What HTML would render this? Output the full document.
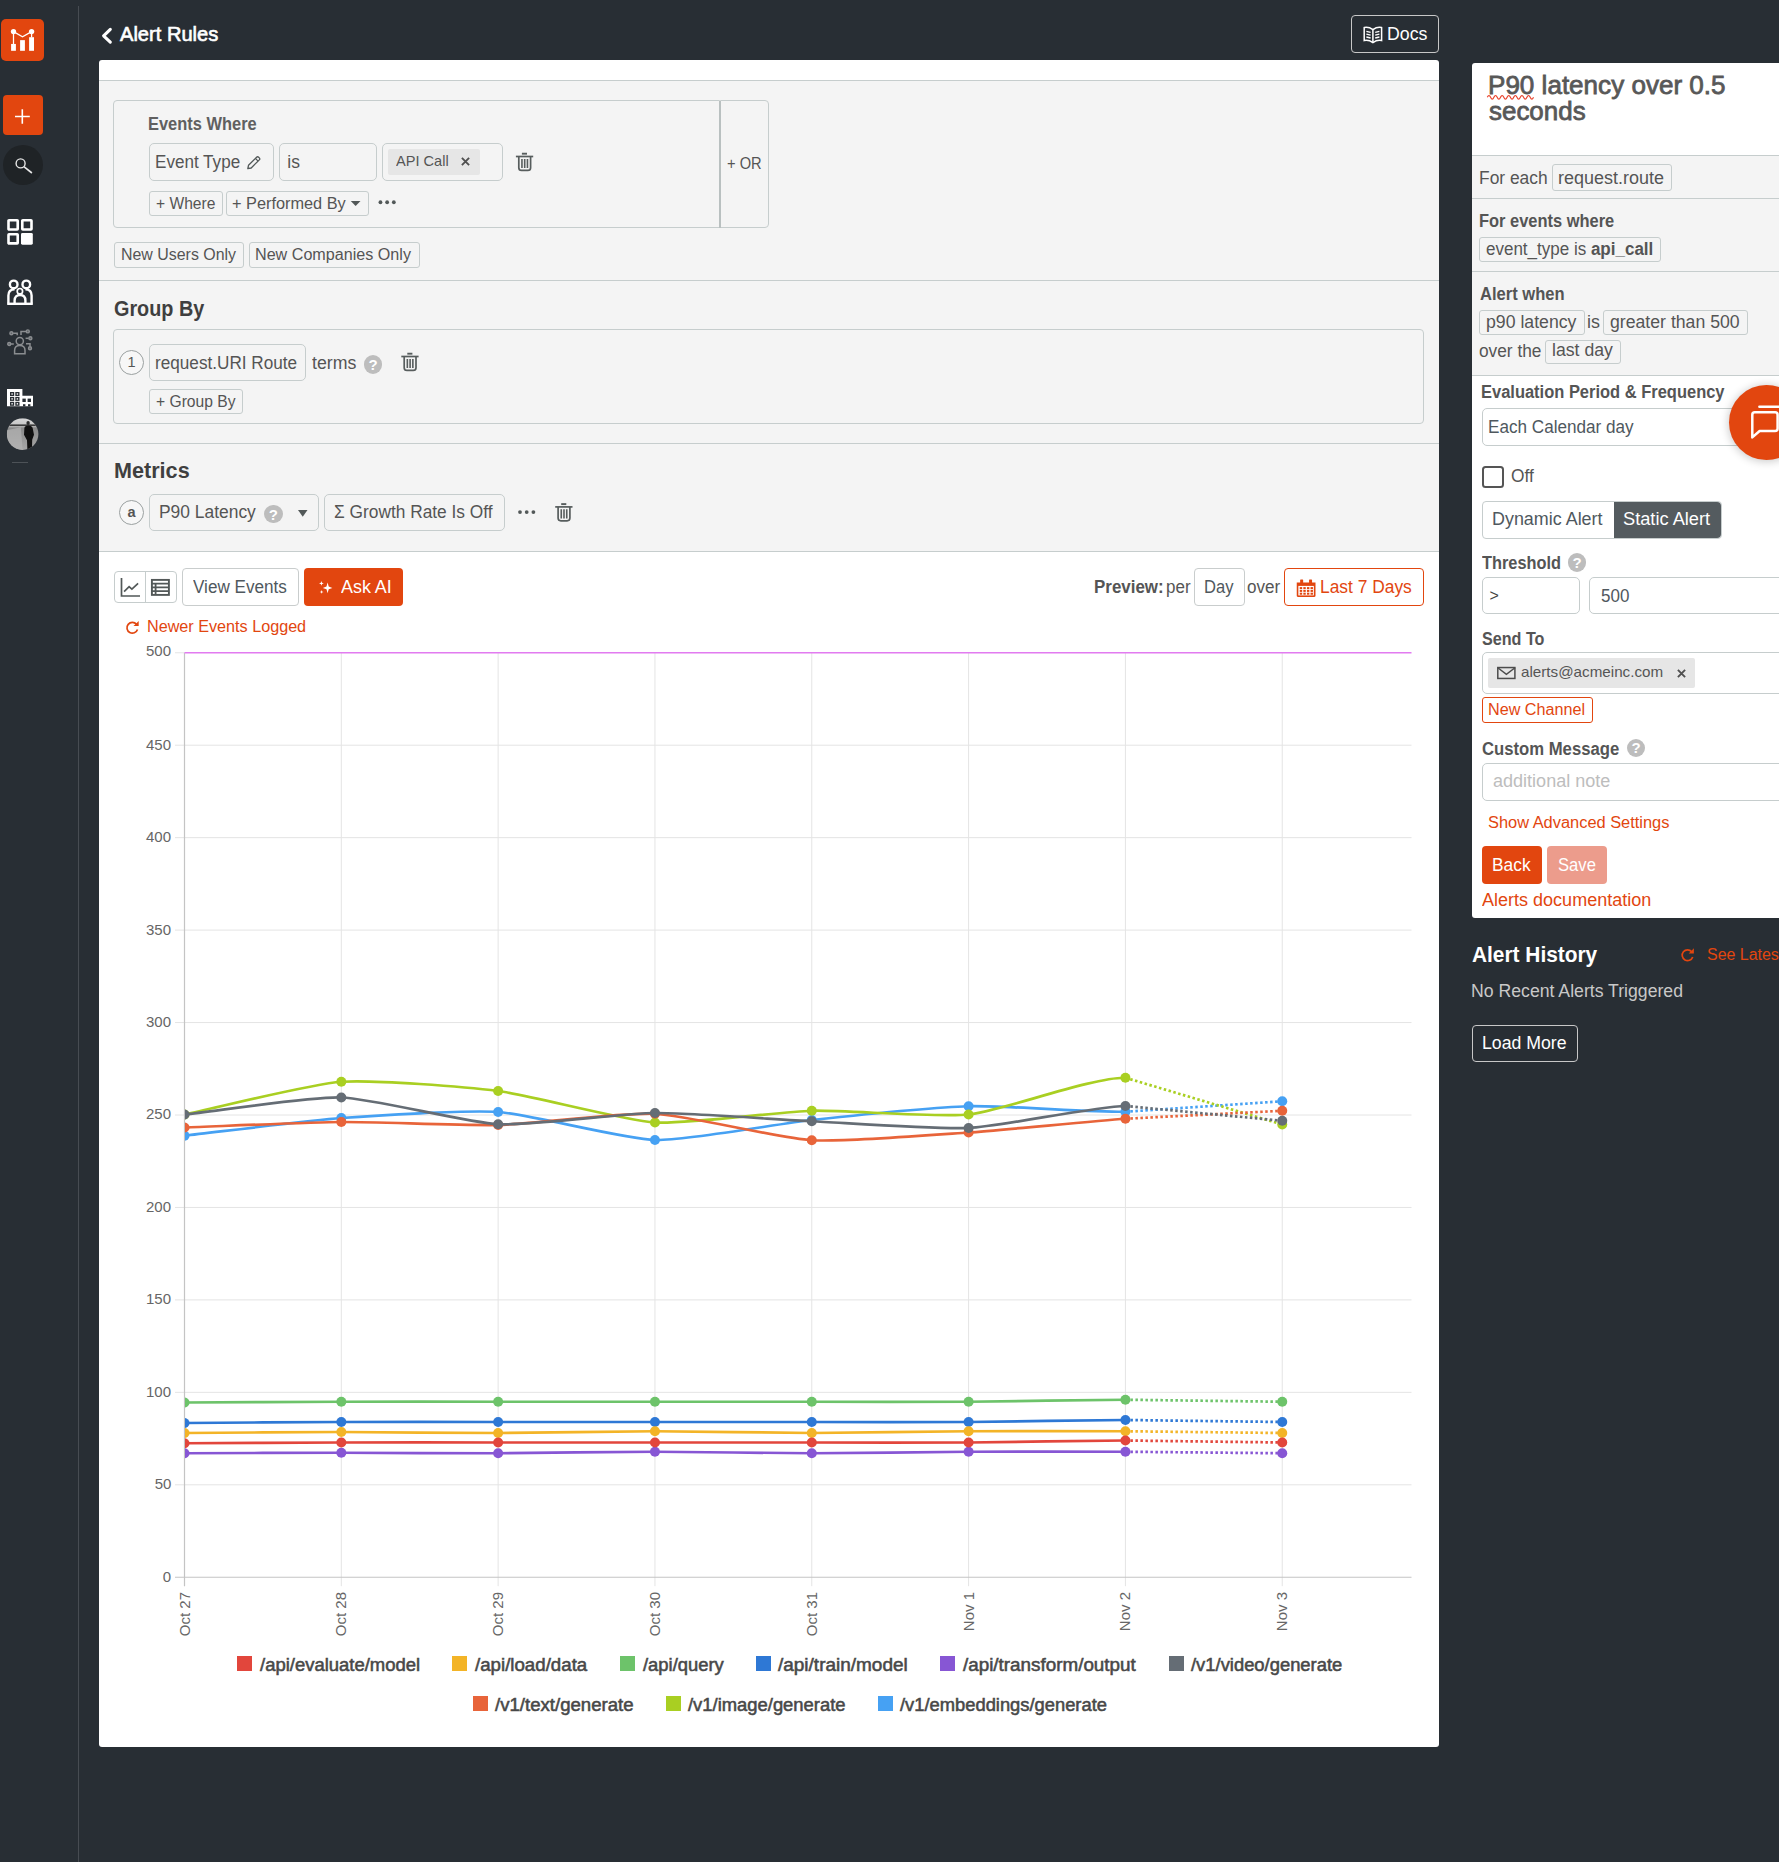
<!DOCTYPE html>
<html><head><meta charset="utf-8"><title>Alert Rules</title>
<style>
html,body{margin:0;padding:0;}
html{width:1779px;height:1862px;overflow:hidden;}
body{width:1779px;height:1862px;overflow:hidden;background:#282e34;position:relative;font-family:"Liberation Sans",sans-serif;}
#root{position:absolute;left:0;top:0;width:1779px;height:1862px;overflow:hidden;}
.b{position:absolute;box-sizing:border-box;}
.t{position:absolute;white-space:nowrap;}
svg{overflow:visible;}
</style></head>
<body>
<div id="root">
<div class="b" style="left:78px;top:6px;width:1px;height:1856px;background:#474c52;"></div>
<div class="b" style="left:1px;top:19px;width:43px;height:42px;border-radius:5px;background:#e2460f;"></div>
<svg class="b" style="left:1px;top:19px;" width="44" height="43" viewBox="0 0 44 43">
<g fill="#fff" stroke="none">
<rect x="10.1" y="24.95" width="4.8" height="6.85"/>
<rect x="19.1" y="21.15" width="4.8" height="10.65"/>
<rect x="28.1" y="18.2" width="4.9" height="13.6"/>
<circle cx="12.5" cy="12.6" r="2.65"/>
<circle cx="30.6" cy="12.6" r="2.65"/>
</g>
<g fill="none" stroke="#fff" stroke-width="1.25">
<path d="M12.5 12.6 L21.5 17.7 L30.6 12.6"/>
<path d="M12.5 12.6 V25.2 M30.6 12.6 V18.4"/>
</g></svg>
<div class="b" style="left:3px;top:95px;width:40px;height:40px;border-radius:4px;background:#e2460f;"></div>
<svg class="b" style="left:3px;top:95px;" width="41" height="41" viewBox="0 0 41 41"><path d="M12 21.5 H26.8 M19.3 14.3 V28.8" stroke="#fff" stroke-width="1.6" fill="none"/></svg>
<div class="b" style="left:3px;top:145px;width:40px;height:40px;border-radius:20px;background:#1f2326;"></div>
<svg class="b" style="left:3px;top:145px;" width="41" height="41" viewBox="0 0 41 41"><circle cx="17.6" cy="18.4" r="4.5" fill="none" stroke="#e8e8e8" stroke-width="1.4"/><path d="M20.9 21.7 L28.9 28" stroke="#e8e8e8" stroke-width="1.6" fill="none"/></svg>
<svg class="b" style="left:7px;top:219px;" width="27" height="27" viewBox="0 0 27 27">
<g fill="none" stroke="#fff" stroke-width="2.6">
<rect x="1.5" y="1.3" width="9.2" height="9.2" rx="0.5"/>
<rect x="15.3" y="1.3" width="9.2" height="9.2" rx="0.5"/>
<rect x="1.5" y="15.2" width="9.2" height="9.2" rx="0.5"/>
</g>
<rect x="14" y="13.9" width="11.8" height="11.8" rx="1.4" fill="#fff"/></svg>
<svg class="b" style="left:7px;top:279px;" width="27" height="27" viewBox="0 0 27 27">
<g fill="none" stroke="#fff" stroke-width="2.4">
<circle cx="6.7" cy="5.4" r="3.8"/>
<circle cx="19.3" cy="5.4" r="3.8"/>
<circle cx="12.9" cy="12.2" r="2.7" stroke-width="1.7"/>
<path d="M1.4 24.6 V16.5 C1.4 12 4 10.4 7.6 10.4 M24.6 24.6 V16.5 C24.6 12 22 10.4 18.4 10.4"/>
<path d="M7.6 24.6 V21.6 C7.6 18 9.8 16 13 16 C16.2 16 18.4 18 18.4 21.6 V24.6"/>
<path d="M0.2 24.8 H25.8"/>
</g></svg>
<svg class="b" style="left:7px;top:329px;" width="27" height="27" viewBox="0 0 27 27">
<g fill="none" stroke="#8a8d90" stroke-width="1.5">
<circle cx="12.8" cy="12.1" r="3.6"/>
<path d="M7.6 24.7 V21.5 C7.6 18.4 9.8 16.6 12.8 16.6 C15.8 16.6 18 18.4 18 21.5 V24.7 Z"/>
<circle cx="4.4" cy="4.2" r="1.5" stroke-width="1.4" fill="#8a8d90" fill-opacity="0.55"/>
<path d="M6.1 4.2 H10.2 V6.2"/>
<circle cx="20.8" cy="2.4" r="1.5" stroke-width="1.4" fill="#8a8d90" fill-opacity="0.55"/>
<path d="M19.1 2.4 H14 V6"/>
<circle cx="23.4" cy="9.3" r="1.5" stroke-width="1.4" fill="#8a8d90" fill-opacity="0.55"/>
<path d="M21.7 9.3 H18.6"/>
<circle cx="2.2" cy="15" r="1.5" stroke-width="1.4" fill="#8a8d90" fill-opacity="0.55"/>
<path d="M3.9 15 H6.8"/>
<circle cx="23" cy="19.2" r="1.5" stroke-width="1.4" fill="#8a8d90" fill-opacity="0.55"/>
<path d="M23 17.5 V14.8 H19"/>
</g></svg>
<svg class="b" style="left:7px;top:389px;" width="27" height="19" viewBox="0 0 27 19">
<path d="M0 0 H15.4 V6.7 H26 V17.3 H0 Z" fill="#fff"/>
<g fill="#282e34">
<rect x="3" y="3" width="4.2" height="4"/><rect x="8.3" y="3" width="4.2" height="4"/>
<rect x="3" y="7.9" width="4.2" height="4"/><rect x="8.3" y="7.9" width="4.2" height="4"/>
<rect x="3" y="12.8" width="4.2" height="4"/><rect x="8.3" y="12.8" width="4.2" height="4"/>
<rect x="15.4" y="9.6" width="3.4" height="3.4"/><rect x="20.6" y="9.6" width="3.4" height="3.4"/>
<rect x="16" y="15.2" width="2.4" height="2.2"/><rect x="21" y="15.2" width="2.4" height="2.2"/>
</g>
<g fill="#fff">
<rect x="4.4" y="4.3" width="1.4" height="1.4"/><rect x="9.7" y="4.3" width="1.4" height="1.4"/>
<rect x="4.4" y="9.2" width="1.4" height="1.4"/><rect x="9.7" y="9.2" width="1.4" height="1.4"/>
<rect x="4.4" y="14.1" width="1.4" height="1.4"/><rect x="9.7" y="14.1" width="1.4" height="1.4"/>
</g></svg>
<svg class="b" style="left:6px;top:418px;" width="32.6" height="32.8" viewBox="0 0 32.6 32.8"><g transform="translate(0.8 0.2)">
<defs><clipPath id="av"><circle cx="15.8" cy="15.9" r="15.8"/></clipPath>
<linearGradient id="avg" x1="0" y1="0" x2="0" y2="1"><stop offset="0" stop-color="#d8d8d8"/><stop offset="0.22" stop-color="#c4c4c4"/><stop offset="0.3" stop-color="#8a8a8a"/><stop offset="1" stop-color="#a9a9a9"/></linearGradient></defs>
<g clip-path="url(#av)">
<rect width="33" height="33" fill="url(#avg)"/>
<rect x="0" y="6.2" width="33" height="1.6" fill="#3a3a3a"/>
<path d="M0 12 L14 9 L16 33 L0 33 Z" fill="#b4b4b4" opacity="0.7"/>
<ellipse cx="21.3" cy="4.8" rx="1.7" ry="2" fill="#2a2a2a"/>
<path d="M17.6 9.5 C18.6 6.5 24.4 6.5 25.8 9.5 L27.2 16.5 L25.4 21.5 L25.2 32 L20.6 32 L20.2 22 L17.2 16.5 Z" fill="#101010"/>
</g></g></svg>
<div class="b" style="left:11.5px;top:462px;width:16.7px;height:1.2px;background:#4d5257;"></div>
<svg class="b" style="left:100px;top:26px;" width="15" height="21" viewBox="0 0 15 21"><path d="M10.3 3.4 L3.6 9.8 L10.3 16.2" fill="none" stroke="#fff" stroke-width="3.1" stroke-linecap="round" stroke-linejoin="round"/></svg>
<div class="t" style="font-size:20.5px;line-height:20.5px;color:#fff;-webkit-text-stroke:0.615px;transform-origin:0 0;transform:scaleX(0.9803);left:119.79px;top:24px;">Alert Rules</div>
<div class="b" style="left:1351px;top:15px;width:88px;height:38px;border-radius:4px;border:1px solid #c8c8c8;"></div>
<svg class="b" style="left:1363px;top:26px;" width="21" height="19" viewBox="0 0 21 19">
<g fill="none" stroke="#fff" stroke-width="1.5">
<path d="M1.2 1.6 C4 1 7 1.6 9.9 3.6 C12.8 1.6 15.8 1 18.6 1.6 V14.6 C15.8 14 12.8 14.6 9.9 16.6 C7 14.6 4 14 1.2 14.6 Z"/>
<path d="M9.9 3.6 V16.6"/>
</g>
<g stroke="#fff" stroke-width="1.3" fill="none">
<path d="M3.4 5.4 L7.6 6.4 M3.4 8.2 L7.6 9.2 M3.4 11 L7.6 12"/>
<path d="M16.4 5.4 L12.2 6.4 M16.4 8.2 L12.2 9.2 M16.4 11 L12.2 12"/>
</g></svg>
<div class="t" style="font-size:17.5px;line-height:17.5px;color:#fff;transform-origin:0 0;transform:scaleX(1.0126);left:1387.36px;top:26px;">Docs</div>
<div class="b" style="left:99px;top:60px;width:1340px;height:1686.5px;border-radius:3px;background:#fff;"></div>
<div class="b" style="left:99px;top:80px;width:1340px;height:471.5px;background:#f4f4f4;"></div>
<div class="b" style="left:99px;top:80px;width:1340px;height:1px;background:#c6cdcd;"></div>
<div class="b" style="left:99px;top:280px;width:1340px;height:1px;background:#c6cdcd;"></div>
<div class="b" style="left:99px;top:443px;width:1340px;height:1px;background:#c6cdcd;"></div>
<div class="b" style="left:99px;top:551px;width:1340px;height:1px;background:#c6cdcd;"></div>
<div class="b" style="left:113px;top:100px;width:607px;height:128px;border-radius:4px 0 0 4px;border:1px solid #c6cdcd;"></div>
<div class="b" style="left:720px;top:100px;width:49px;height:128px;border-radius:0 4px 4px 0;border:1px solid #c6cdcd;"></div>
<div class="b" style="left:719.4px;top:100.5px;width:1.2px;height:127px;background:#b9c0c0;"></div>
<div class="t" style="font-size:17.5px;line-height:17.5px;color:#606060;font-weight:700;transform-origin:0 0;transform:scaleX(0.9389);left:148.43px;top:116px;">Events Where</div>
<div class="b" style="left:149px;top:143px;width:125px;height:38px;border-radius:5px;border:1px solid #c6cdcd;"></div>
<div class="t" style="font-size:17.5px;line-height:17.5px;color:#555;transform-origin:0 0;transform:scaleX(0.9762);left:155.41px;top:154px;">Event Type</div>
<svg class="b" style="left:247px;top:156px;" width="14.5" height="14.5" viewBox="0 0 14.5 14.5">
<g fill="none" stroke="#525858" stroke-width="1.3" stroke-linejoin="round">
<path d="M0.8 12.7 L1.5 9.3 L9.6 1.2 C10.2 0.6 11 0.6 11.6 1.2 L12.3 1.9 C12.9 2.5 12.9 3.3 12.3 3.9 L4.2 12 Z"/>
<path d="M8.4 2.4 L11.1 5.1"/>
</g></svg>
<div class="b" style="left:279px;top:143px;width:98px;height:38px;border-radius:5px;border:1px solid #c6cdcd;"></div>
<div class="t" style="font-size:17.5px;line-height:17.5px;color:#555;left:287.35px;top:154px;">is</div>
<div class="b" style="left:382px;top:143px;width:121px;height:38px;border-radius:5px;border:1px solid #c6cdcd;"></div>
<div class="b" style="left:388px;top:149.25px;width:91.5px;height:25.5px;border-radius:2px;background:#e6e6e6;"></div>
<div class="t" style="font-size:14.5px;line-height:14.5px;color:#555;transform-origin:0 0;transform:scaleX(1.0046);left:395.78px;top:154px;">API Call</div>
<svg class="b" style="left:461px;top:157px;" width="10" height="10" viewBox="0 0 10 10"><path d="M0.9 0.9 L8.1 8.1 M8.1 0.9 L0.9 8.1" stroke="#505050" stroke-width="1.9" fill="none"/></svg>
<svg class="b" style="left:515px;top:152px;" width="20" height="21" viewBox="0 0 20 21"><g transform="translate(0 0.5)">
<g fill="none" stroke="#575d5d" stroke-width="1.7">
<path d="M0.9 4 H18.2"/>
<path d="M6.9 1.2 H12" stroke-width="1.9"/>
<path d="M3.8 4 V15.2 C3.8 17.2 4.9 17.9 6.6 17.9 H12.8 C14.5 17.9 15.6 17.2 15.6 15.2 V4"/>
<path d="M6.95 6.4 V15.6 M9.7 6.4 V15.6 M12.45 6.4 V15.6" stroke-width="1.6"/>
</g></g></svg>
<div class="t" style="font-size:16px;line-height:16px;color:#555;transform-origin:0 0;transform:scaleX(0.9165);left:726.9px;top:156px;">+ OR</div>
<div class="b" style="left:149px;top:191px;width:74px;height:25px;border-radius:3px;border:1px solid #c6cdcd;"></div>
<div class="t" style="font-size:16px;line-height:16px;color:#555;transform-origin:0 0;transform:scaleX(0.9743);left:155.6px;top:196px;">+ Where</div>
<div class="b" style="left:226px;top:191px;width:143px;height:25px;border-radius:3px;border:1px solid #c6cdcd;"></div>
<div class="t" style="font-size:16px;line-height:16px;color:#555;transform-origin:0 0;transform:scaleX(1.0193);left:232.32px;top:196px;">+ Performed By</div>
<svg class="b" style="left:350px;top:201px;" width="10.75" height="6" viewBox="0 0 10.75 6"><g transform="translate(0.75 0)"><path d="M0 0 H9.75 L4.875 5 Z" fill="#525858"/></g></svg>
<svg class="b" style="left:378px;top:200px;" width="18.4" height="5" viewBox="0 0 18.4 5"><g transform="translate(0.55 0.25)"><circle cx="1.9" cy="2" r="1.9" fill="#525858"/><circle cx="8.6" cy="2" r="1.9" fill="#525858"/><circle cx="15.3" cy="2" r="1.9" fill="#525858"/></g></svg>
<div class="b" style="left:114px;top:242px;width:130px;height:26px;border-radius:3px;border:1px solid #c6cdcd;"></div>
<div class="t" style="font-size:16px;line-height:16px;color:#555;transform-origin:0 0;transform:scaleX(0.9954);left:120.5px;top:247px;">New Users Only</div>
<div class="b" style="left:249px;top:242px;width:171px;height:26px;border-radius:3px;border:1px solid #c6cdcd;"></div>
<div class="t" style="font-size:16px;line-height:16px;color:#555;transform-origin:0 0;transform:scaleX(1.0081);left:255.48px;top:247px;">New Companies Only</div>
<div class="t" style="font-size:22.4px;line-height:22.4px;color:#3f3f3f;font-weight:700;transform-origin:0 0;transform:scaleX(0.8846);left:114.04px;top:298px;">Group By</div>
<div class="b" style="left:113px;top:329px;width:1311px;height:95px;border-radius:4px;border:1px solid #c6cdcd;"></div>
<div class="b" style="left:119px;top:350px;width:25px;height:25px;border-radius:13px;border:1px solid #9aa0a0;background:#f7f7f7;"></div>
<div class="t" style="font-size:14.5px;line-height:14.5px;color:#555;left:-68.5px;width:400px;text-align:center;top:355px;"><span>1</span></div>
<div class="b" style="left:149px;top:344px;width:157px;height:37px;border-radius:5px;border:1px solid #c6cdcd;"></div>
<div class="t" style="font-size:17.5px;line-height:17.5px;color:#555;transform-origin:0 0;transform:scaleX(0.9805);left:155.12px;top:355px;">request.URI Route</div>
<div class="t" style="font-size:17.5px;line-height:17.5px;color:#555;transform-origin:0 0;transform:scaleX(1.0135);left:312.02px;top:355px;">terms</div>
<div class="b" style="left:363.7px;top:355px;width:18.8px;height:18.8px;border-radius:50%;background:#bdbdbd;"></div>
<div class="t" style="font-size:15px;line-height:15px;color:#fff;font-weight:700;left:173.1px;width:400px;text-align:center;top:357px;"><span>?</span></div>
<svg class="b" style="left:400px;top:352px;" width="20" height="21" viewBox="0 0 20 21"><g transform="translate(0.4 0.5)">
<g fill="none" stroke="#575d5d" stroke-width="1.7">
<path d="M0.9 4 H18.2"/>
<path d="M6.9 1.2 H12" stroke-width="1.9"/>
<path d="M3.8 4 V15.2 C3.8 17.2 4.9 17.9 6.6 17.9 H12.8 C14.5 17.9 15.6 17.2 15.6 15.2 V4"/>
<path d="M6.95 6.4 V15.6 M9.7 6.4 V15.6 M12.45 6.4 V15.6" stroke-width="1.6"/>
</g></g></svg>
<div class="b" style="left:149px;top:389px;width:94px;height:25px;border-radius:3px;border:1px solid #c6cdcd;"></div>
<div class="t" style="font-size:16px;line-height:16px;color:#555;transform-origin:0 0;transform:scaleX(0.9768);left:155.6px;top:394px;">+ Group By</div>
<div class="t" style="font-size:22.4px;line-height:22.4px;color:#3f3f3f;font-weight:700;transform-origin:0 0;transform:scaleX(0.965);left:113.72px;top:460px;">Metrics</div>
<div class="b" style="left:119px;top:500px;width:25px;height:25px;border-radius:13px;border:1px solid #9aa0a0;background:#f7f7f7;"></div>
<div class="t" style="font-size:14.5px;line-height:14.5px;color:#555;font-weight:700;left:-68.5px;width:400px;text-align:center;top:505px;"><span>a</span></div>
<div class="b" style="left:149px;top:494px;width:170px;height:37px;border-radius:5px;border:1px solid #c6cdcd;"></div>
<div class="t" style="font-size:17.5px;line-height:17.5px;color:#555;transform-origin:0 0;transform:scaleX(0.995);left:159.13px;top:504px;">P90 Latency</div>
<div class="b" style="left:264px;top:504.85px;width:18.5px;height:18.5px;border-radius:50%;background:#bdbdbd;"></div>
<div class="t" style="font-size:15px;line-height:15px;color:#fff;font-weight:700;left:73.25px;width:400px;text-align:center;top:507px;"><span>?</span></div>
<svg class="b" style="left:298px;top:510px;" width="10.5" height="7.75" viewBox="0 0 10.5 7.75"><path d="M0 0 H9.5 L4.75 6.75 Z" fill="#525858"/></svg>
<div class="b" style="left:324px;top:494px;width:181px;height:37px;border-radius:5px;border:1px solid #c6cdcd;"></div>
<div class="t" style="font-size:17.5px;line-height:17.5px;color:#555;transform-origin:0 0;transform:scaleX(0.9897);left:334.02px;top:504px;">&Sigma; Growth Rate Is Off</div>
<svg class="b" style="left:518px;top:510px;" width="18.4" height="5" viewBox="0 0 18.4 5"><g transform="translate(0.1 0.1)"><circle cx="1.9" cy="2" r="1.9" fill="#525858"/><circle cx="8.6" cy="2" r="1.9" fill="#525858"/><circle cx="15.3" cy="2" r="1.9" fill="#525858"/></g></svg>
<svg class="b" style="left:554px;top:502px;" width="20" height="21" viewBox="0 0 20 21"><g transform="translate(0.3 0.9)">
<g fill="none" stroke="#575d5d" stroke-width="1.7">
<path d="M0.9 4 H18.2"/>
<path d="M6.9 1.2 H12" stroke-width="1.9"/>
<path d="M3.8 4 V15.2 C3.8 17.2 4.9 17.9 6.6 17.9 H12.8 C14.5 17.9 15.6 17.2 15.6 15.2 V4"/>
<path d="M6.95 6.4 V15.6 M9.7 6.4 V15.6 M12.45 6.4 V15.6" stroke-width="1.6"/>
</g></g></svg>
<div class="b" style="left:114px;top:571px;width:63px;height:32px;border-radius:4px;border:1px solid #c6cdcd;background:#fff;"></div>
<div class="b" style="left:145px;top:571.5px;width:1px;height:30.75px;background:#c6cdcd;"></div>
<svg class="b" style="left:120px;top:578px;" width="21" height="20" viewBox="0 0 21 20"><g transform="translate(0.5 0)">
<path d="M1 0 V18 H19.5" fill="none" stroke="#525858" stroke-width="1.7"/>
<path d="M3.6 13.6 L8.6 8.6 L11.4 11.2 L17.6 5.4" fill="none" stroke="#525858" stroke-width="1.7"/></g></svg>
<svg class="b" style="left:151px;top:579px;" width="20" height="18" viewBox="0 0 20 18">
<rect x="0.9" y="0.9" width="17" height="15" fill="none" stroke="#525858" stroke-width="1.9"/>
<path d="M0.8 4.6 H18 M0.8 8.4 H18 M0.8 12.2 H18" stroke="#525858" stroke-width="1.8" fill="none"/>
<path d="M4.6 4.6 V16" stroke="#525858" stroke-width="1.8" fill="none"/></svg>
<div class="b" style="left:182px;top:568px;width:117px;height:38px;border-radius:4px;border:1px solid #c9cdcd;background:#fff;"></div>
<div class="t" style="font-size:17.5px;line-height:17.5px;color:#4f585e;transform-origin:0 0;transform:scaleX(0.9778);left:193.28px;top:579px;">View Events</div>
<div class="b" style="left:304px;top:568px;width:98.5px;height:37.5px;border-radius:4px;background:#e2460f;"></div>
<svg class="b" style="left:319px;top:581px;" width="15" height="14" viewBox="0 0 15 14">
<path d="M8.6 1.6 L9.7 5.6 L13.4 6.9 L9.7 8.2 L8.6 12.2 L7.5 8.2 L3.8 6.9 L7.5 5.6 Z" fill="#fff"/>
<path d="M2.4 0 L3 1.8 L4.8 2.4 L3 3 L2.4 4.8 L1.8 3 L0 2.4 L1.8 1.8 Z" fill="#fff"/>
<path d="M2.6 9 L3.1 10.4 L4.5 10.9 L3.1 11.4 L2.6 12.8 L2.1 11.4 L0.7 10.9 L2.1 10.4 Z" fill="#fff"/></svg>
<div class="t" style="font-size:17.5px;line-height:17.5px;color:#fff;transform-origin:0 0;transform:scaleX(1.0232);left:341.06px;top:579px;">Ask AI</div>
<div class="t" style="font-size:17.5px;line-height:17.5px;color:#555;font-weight:700;transform-origin:0 0;transform:scaleX(0.9678);left:1093.89px;top:579px;">Preview:</div>
<div class="t" style="font-size:17.5px;line-height:17.5px;color:#555;transform-origin:0 0;transform:scaleX(0.9711);left:1165.64px;top:579px;">per</div>
<div class="b" style="left:1194px;top:568px;width:51px;height:38px;border-radius:4px;border:1px solid #c9cdcd;background:#fff;"></div>
<div class="t" style="font-size:17.5px;line-height:17.5px;color:#4f585e;transform-origin:0 0;transform:scaleX(0.9461);left:1204.2px;top:579px;">Day</div>
<div class="t" style="font-size:17.5px;line-height:17.5px;color:#555;transform-origin:0 0;transform:scaleX(0.9768);left:1247.37px;top:579px;">over</div>
<div class="b" style="left:1284px;top:568px;width:140px;height:38px;border-radius:4px;border:1px solid #e2460f;background:#fff;"></div>
<svg class="b" style="left:1296px;top:579px;" width="19.75" height="18.5" viewBox="0 0 19.75 18.5"><g transform="translate(0.75 0.5)">
<path d="M0 3 H18.75 V16.3 C18.75 17 18.3 17.5 17.6 17.5 H1.2 C0.5 17.5 0 17 0 16.3 Z" fill="#e2460f"/>
<rect x="3.4" y="0" width="3" height="4" rx="0.6" fill="#e2460f"/><rect x="12.3" y="0" width="3" height="4" rx="0.6" fill="#e2460f"/>
<rect x="1.6" y="6.4" width="15.5" height="9.5" fill="#fff"/>
<g fill="#e2460f">
<rect x="3" y="7.6" width="2.4" height="2"/><rect x="6.6" y="7.6" width="2.4" height="2"/><rect x="10.2" y="7.6" width="2.4" height="2"/><rect x="13.8" y="7.6" width="2.4" height="2"/>
<rect x="3" y="10.4" width="2.4" height="2"/><rect x="6.6" y="10.4" width="2.4" height="2"/><rect x="10.2" y="10.4" width="2.4" height="2"/><rect x="13.8" y="10.4" width="2.4" height="2"/>
<rect x="3" y="13.2" width="2.4" height="2"/><rect x="6.6" y="13.2" width="2.4" height="2"/><rect x="10.2" y="13.2" width="2.4" height="2"/><rect x="13.8" y="13.2" width="2.4" height="2"/>
</g></g></svg>
<div class="t" style="font-size:17.5px;line-height:17.5px;color:#e2460f;transform-origin:0 0;transform:scaleX(0.9932);left:1320.39px;top:579px;">Last 7 Days</div>
<svg class="b" style="left:125px;top:620px;" width="15" height="15" viewBox="0 0 15 15"><g transform="translate(0.3 0.1)">
<path d="M11.2 4.2 A5.4 5.4 0 1 0 12.2 9.4" fill="none" stroke="#e2460f" stroke-width="1.7"/>
<path d="M13.4 0.8 V6 H8.2 Z" fill="#e2460f"/></g></svg>
<div class="t" style="font-size:16px;line-height:16px;color:#e2460f;transform-origin:0 0;transform:scaleX(1.0107);left:146.73px;top:619px;">Newer Events Logged</div>
<svg class="b" style="left:0px;top:0px;pointer-events:none;" width="1780" height="1863" viewBox="0 0 1780 1863"><path d="M175 745.20 H1411.5" stroke="#e4e4e4" stroke-width="1"/>
<path d="M175 837.65 H1411.5" stroke="#e4e4e4" stroke-width="1"/>
<path d="M175 930.10 H1411.5" stroke="#e4e4e4" stroke-width="1"/>
<path d="M175 1022.55 H1411.5" stroke="#e4e4e4" stroke-width="1"/>
<path d="M175 1115.00 H1411.5" stroke="#e4e4e4" stroke-width="1"/>
<path d="M175 1207.45 H1411.5" stroke="#e4e4e4" stroke-width="1"/>
<path d="M175 1299.90 H1411.5" stroke="#e4e4e4" stroke-width="1"/>
<path d="M175 1392.35 H1411.5" stroke="#e4e4e4" stroke-width="1"/>
<path d="M175 1484.80 H1411.5" stroke="#e4e4e4" stroke-width="1"/>
<path d="M341.32 652.75 V1586.2" stroke="#e4e4e4" stroke-width="1"/>
<path d="M498.14 652.75 V1586.2" stroke="#e4e4e4" stroke-width="1"/>
<path d="M654.96 652.75 V1586.2" stroke="#e4e4e4" stroke-width="1"/>
<path d="M811.78 652.75 V1586.2" stroke="#e4e4e4" stroke-width="1"/>
<path d="M968.60 652.75 V1586.2" stroke="#e4e4e4" stroke-width="1"/>
<path d="M1125.42 652.75 V1586.2" stroke="#e4e4e4" stroke-width="1"/>
<path d="M1282.24 652.75 V1586.2" stroke="#e4e4e4" stroke-width="1"/>
<path d="M184.5 652.75 V1586.2" stroke="#c4c4c4" stroke-width="1.2"/>
<path d="M175 1577.25 H1411.5" stroke="#c4c4c4" stroke-width="1.2"/>
<path d="M175 652.75 H184.5" stroke="#e4e4e4" stroke-width="1"/>
<path d="M184.5 652.75 H1411.5" stroke="#e27bf0" stroke-width="1.5"/>
<defs><clipPath id="ca"><rect x="185.0" y="600" width="1300" height="1000"/></clipPath></defs><g clip-path="url(#ca)">
<path d="M184.50 1135.75 C215.86 1132.20 309.87 1120.38 341.32 1118.00 C372.60 1115.63 467.01 1109.82 498.14 1112.00 C529.74 1114.22 623.48 1139.20 654.96 1140.00 C686.20 1140.80 780.35 1123.38 811.78 1120.00 C843.08 1116.63 937.19 1107.08 968.60 1106.25 C999.91 1105.43 1094.08 1112.25 1125.42 1111.75" fill="none" stroke="#46a1f3" stroke-width="2.7" stroke-linejoin="round"/>
<path d="M1125.42 1111.75 L1282.24 1101.25" fill="none" stroke="#46a1f3" stroke-width="2.7" stroke-dasharray="2.5 2.5"/>
<circle cx="184.50" cy="1135.75" r="5" fill="#46a1f3"/>
<circle cx="341.32" cy="1118" r="5" fill="#46a1f3"/>
<circle cx="498.14" cy="1112" r="5" fill="#46a1f3"/>
<circle cx="654.96" cy="1140" r="5" fill="#46a1f3"/>
<circle cx="811.78" cy="1120" r="5" fill="#46a1f3"/>
<circle cx="968.60" cy="1106.25" r="5" fill="#46a1f3"/>
<circle cx="1125.42" cy="1111.75" r="5" fill="#46a1f3"/>
<circle cx="1282.24" cy="1101.25" r="5" fill="#46a1f3"/>
<path d="M184.50 1114.50 C215.86 1107.95 309.65 1084.12 341.32 1081.75 C372.38 1079.42 467.06 1086.96 498.14 1091.00 C529.79 1095.11 623.33 1120.51 654.96 1122.50 C686.06 1124.46 780.38 1111.55 811.78 1110.75 C843.10 1109.95 937.65 1117.76 968.60 1114.50 C1000.38 1111.16 1094.30 1076.76 1125.42 1077.75" fill="none" stroke="#a9cf22" stroke-width="2.7" stroke-linejoin="round"/>
<path d="M1125.42 1077.75 L1282.24 1124.5" fill="none" stroke="#a9cf22" stroke-width="2.7" stroke-dasharray="2.5 2.5"/>
<circle cx="184.50" cy="1114.5" r="5" fill="#a9cf22"/>
<circle cx="341.32" cy="1081.75" r="5" fill="#a9cf22"/>
<circle cx="498.14" cy="1091" r="5" fill="#a9cf22"/>
<circle cx="654.96" cy="1122.5" r="5" fill="#a9cf22"/>
<circle cx="811.78" cy="1110.75" r="5" fill="#a9cf22"/>
<circle cx="968.60" cy="1114.5" r="5" fill="#a9cf22"/>
<circle cx="1125.42" cy="1077.75" r="5" fill="#a9cf22"/>
<circle cx="1282.24" cy="1124.5" r="5" fill="#a9cf22"/>
<path d="M184.50 1127.50 C215.86 1126.40 309.95 1122.25 341.32 1122.00 C372.68 1121.75 466.81 1125.82 498.14 1125.00 C529.54 1124.17 623.78 1112.23 654.96 1113.75 C686.50 1115.28 780.21 1138.36 811.78 1140.25 C842.94 1142.11 937.28 1134.65 968.60 1132.50 C1000.00 1130.35 1094.02 1120.93 1125.42 1118.75" fill="none" stroke="#e8643a" stroke-width="2.7" stroke-linejoin="round"/>
<path d="M1125.42 1118.75 L1282.24 1110.75" fill="none" stroke="#e8643a" stroke-width="2.7" stroke-dasharray="2.5 2.5"/>
<circle cx="184.50" cy="1127.5" r="5" fill="#e8643a"/>
<circle cx="341.32" cy="1122" r="5" fill="#e8643a"/>
<circle cx="498.14" cy="1125" r="5" fill="#e8643a"/>
<circle cx="654.96" cy="1113.75" r="5" fill="#e8643a"/>
<circle cx="811.78" cy="1140.25" r="5" fill="#e8643a"/>
<circle cx="968.60" cy="1132.5" r="5" fill="#e8643a"/>
<circle cx="1125.42" cy="1118.75" r="5" fill="#e8643a"/>
<circle cx="1282.24" cy="1110.75" r="5" fill="#e8643a"/>
<path d="M184.50 1114.50 C215.86 1111.10 310.09 1096.53 341.32 1097.50 C372.82 1098.48 466.59 1122.69 498.14 1124.25 C529.32 1125.79 623.58 1113.30 654.96 1113.00 C686.31 1112.70 780.41 1119.75 811.78 1121.25 C843.14 1122.75 937.37 1129.52 968.60 1128.00 C1000.10 1126.47 1093.97 1106.73 1125.42 1106.00" fill="none" stroke="#656d75" stroke-width="2.7" stroke-linejoin="round"/>
<path d="M1125.42 1106 L1282.24 1120.75" fill="none" stroke="#656d75" stroke-width="2.7" stroke-dasharray="2.5 2.5"/>
<circle cx="184.50" cy="1114.5" r="5" fill="#656d75"/>
<circle cx="341.32" cy="1097.5" r="5" fill="#656d75"/>
<circle cx="498.14" cy="1124.25" r="5" fill="#656d75"/>
<circle cx="654.96" cy="1113" r="5" fill="#656d75"/>
<circle cx="811.78" cy="1121.25" r="5" fill="#656d75"/>
<circle cx="968.60" cy="1128" r="5" fill="#656d75"/>
<circle cx="1125.42" cy="1106" r="5" fill="#656d75"/>
<circle cx="1282.24" cy="1120.75" r="5" fill="#656d75"/>
<path d="M184.50 1453.25 C215.86 1453.15 309.96 1452.75 341.32 1452.75 C372.68 1452.75 466.78 1453.35 498.14 1453.25 C529.50 1453.15 623.60 1451.75 654.96 1451.75 C686.32 1451.75 780.42 1453.25 811.78 1453.25 C843.14 1453.25 937.24 1451.90 968.60 1451.75 C999.96 1451.60 1094.06 1451.60 1125.42 1451.75" fill="none" stroke="#8756d4" stroke-width="2.7" stroke-linejoin="round"/>
<path d="M1125.42 1451.75 L1282.24 1453.25" fill="none" stroke="#8756d4" stroke-width="2.7" stroke-dasharray="2.5 2.5"/>
<circle cx="184.50" cy="1453.25" r="5" fill="#8756d4"/>
<circle cx="341.32" cy="1452.75" r="5" fill="#8756d4"/>
<circle cx="498.14" cy="1453.25" r="5" fill="#8756d4"/>
<circle cx="654.96" cy="1451.75" r="5" fill="#8756d4"/>
<circle cx="811.78" cy="1453.25" r="5" fill="#8756d4"/>
<circle cx="968.60" cy="1451.75" r="5" fill="#8756d4"/>
<circle cx="1125.42" cy="1451.75" r="5" fill="#8756d4"/>
<circle cx="1282.24" cy="1453.25" r="5" fill="#8756d4"/>
<path d="M184.50 1423.00 C215.86 1422.80 309.96 1422.10 341.32 1422.00 C372.68 1421.90 466.78 1422.00 498.14 1422.00 C529.50 1422.00 623.60 1422.00 654.96 1422.00 C686.32 1422.00 780.42 1422.00 811.78 1422.00 C843.14 1422.00 937.24 1422.20 968.60 1422.00 C999.97 1421.80 1094.06 1420.00 1125.42 1420.00" fill="none" stroke="#2e78d5" stroke-width="2.7" stroke-linejoin="round"/>
<path d="M1125.42 1420 L1282.24 1422" fill="none" stroke="#2e78d5" stroke-width="2.7" stroke-dasharray="2.5 2.5"/>
<circle cx="184.50" cy="1423" r="5" fill="#2e78d5"/>
<circle cx="341.32" cy="1422" r="5" fill="#2e78d5"/>
<circle cx="498.14" cy="1422" r="5" fill="#2e78d5"/>
<circle cx="654.96" cy="1422" r="5" fill="#2e78d5"/>
<circle cx="811.78" cy="1422" r="5" fill="#2e78d5"/>
<circle cx="968.60" cy="1422" r="5" fill="#2e78d5"/>
<circle cx="1125.42" cy="1420" r="5" fill="#2e78d5"/>
<circle cx="1282.24" cy="1422" r="5" fill="#2e78d5"/>
<path d="M184.50 1402.50 C215.86 1402.35 309.96 1401.83 341.32 1401.75 C372.68 1401.68 466.78 1401.75 498.14 1401.75 C529.50 1401.75 623.60 1401.75 654.96 1401.75 C686.32 1401.75 780.42 1401.75 811.78 1401.75 C843.14 1401.75 937.24 1401.95 968.60 1401.75 C999.97 1401.55 1094.06 1399.75 1125.42 1399.75" fill="none" stroke="#6dc36a" stroke-width="2.7" stroke-linejoin="round"/>
<path d="M1125.42 1399.75 L1282.24 1401.75" fill="none" stroke="#6dc36a" stroke-width="2.7" stroke-dasharray="2.5 2.5"/>
<circle cx="184.50" cy="1402.5" r="5" fill="#6dc36a"/>
<circle cx="341.32" cy="1401.75" r="5" fill="#6dc36a"/>
<circle cx="498.14" cy="1401.75" r="5" fill="#6dc36a"/>
<circle cx="654.96" cy="1401.75" r="5" fill="#6dc36a"/>
<circle cx="811.78" cy="1401.75" r="5" fill="#6dc36a"/>
<circle cx="968.60" cy="1401.75" r="5" fill="#6dc36a"/>
<circle cx="1125.42" cy="1399.75" r="5" fill="#6dc36a"/>
<circle cx="1282.24" cy="1401.75" r="5" fill="#6dc36a"/>
<path d="M184.50 1433.00 C215.86 1432.80 309.96 1432.00 341.32 1432.00 C372.68 1432.00 466.78 1433.07 498.14 1433.00 C529.50 1432.92 623.60 1431.25 654.96 1431.25 C686.32 1431.25 780.42 1433.00 811.78 1433.00 C843.14 1433.00 937.24 1431.43 968.60 1431.25 C999.96 1431.08 1094.06 1431.08 1125.42 1431.25" fill="none" stroke="#f3b427" stroke-width="2.7" stroke-linejoin="round"/>
<path d="M1125.42 1431.25 L1282.24 1433" fill="none" stroke="#f3b427" stroke-width="2.7" stroke-dasharray="2.5 2.5"/>
<circle cx="184.50" cy="1433" r="5" fill="#f3b427"/>
<circle cx="341.32" cy="1432" r="5" fill="#f3b427"/>
<circle cx="498.14" cy="1433" r="5" fill="#f3b427"/>
<circle cx="654.96" cy="1431.25" r="5" fill="#f3b427"/>
<circle cx="811.78" cy="1433" r="5" fill="#f3b427"/>
<circle cx="968.60" cy="1431.25" r="5" fill="#f3b427"/>
<circle cx="1125.42" cy="1431.25" r="5" fill="#f3b427"/>
<circle cx="1282.24" cy="1433" r="5" fill="#f3b427"/>
<path d="M184.50 1443.25 C215.86 1443.10 309.96 1442.58 341.32 1442.50 C372.68 1442.43 466.78 1442.50 498.14 1442.50 C529.50 1442.50 623.60 1442.50 654.96 1442.50 C686.32 1442.50 780.42 1442.50 811.78 1442.50 C843.14 1442.50 937.24 1442.70 968.60 1442.50 C999.97 1442.30 1094.06 1440.50 1125.42 1440.50" fill="none" stroke="#e2463c" stroke-width="2.7" stroke-linejoin="round"/>
<path d="M1125.42 1440.5 L1282.24 1442.5" fill="none" stroke="#e2463c" stroke-width="2.7" stroke-dasharray="2.5 2.5"/>
<circle cx="184.50" cy="1443.25" r="5" fill="#e2463c"/>
<circle cx="341.32" cy="1442.5" r="5" fill="#e2463c"/>
<circle cx="498.14" cy="1442.5" r="5" fill="#e2463c"/>
<circle cx="654.96" cy="1442.5" r="5" fill="#e2463c"/>
<circle cx="811.78" cy="1442.5" r="5" fill="#e2463c"/>
<circle cx="968.60" cy="1442.5" r="5" fill="#e2463c"/>
<circle cx="1125.42" cy="1440.5" r="5" fill="#e2463c"/>
<circle cx="1282.24" cy="1442.5" r="5" fill="#e2463c"/>
</g></svg>
<div class="t" style="font-size:15px;line-height:15px;color:#666;right:1608.01px;top:643px;">500</div>
<div class="t" style="font-size:15px;line-height:15px;color:#666;right:1608.01px;top:737px;">450</div>
<div class="t" style="font-size:15px;line-height:15px;color:#666;right:1608.01px;top:829px;">400</div>
<div class="t" style="font-size:15px;line-height:15px;color:#666;right:1608.01px;top:922px;">350</div>
<div class="t" style="font-size:15px;line-height:15px;color:#666;right:1608.01px;top:1014px;">300</div>
<div class="t" style="font-size:15px;line-height:15px;color:#666;right:1608.01px;top:1106px;">250</div>
<div class="t" style="font-size:15px;line-height:15px;color:#666;right:1608.01px;top:1199px;">200</div>
<div class="t" style="font-size:15px;line-height:15px;color:#666;right:1608.01px;top:1291px;">150</div>
<div class="t" style="font-size:15px;line-height:15px;color:#666;right:1608.01px;top:1384px;">100</div>
<div class="t" style="font-size:15px;line-height:15px;color:#666;right:1607.68px;top:1476px;">50</div>
<div class="t" style="font-size:15px;line-height:15px;color:#666;right:1607.92px;top:1569px;">0</div>
<div class="t" style="font-size:15px;line-height:15px;color:#666;right:1589.3px;top:1579px;transform-origin:100% 13px;transform:rotate(-90deg);">Oct 27</div>
<div class="t" style="font-size:15px;line-height:15px;color:#666;right:1432.48px;top:1579px;transform-origin:100% 13px;transform:rotate(-90deg);">Oct 28</div>
<div class="t" style="font-size:15px;line-height:15px;color:#666;right:1275.66px;top:1579px;transform-origin:100% 13px;transform:rotate(-90deg);">Oct 29</div>
<div class="t" style="font-size:15px;line-height:15px;color:#666;right:1118.84px;top:1579px;transform-origin:100% 13px;transform:rotate(-90deg);">Oct 30</div>
<div class="t" style="font-size:15px;line-height:15px;color:#666;right:962.02px;top:1579px;transform-origin:100% 13px;transform:rotate(-90deg);">Oct 31</div>
<div class="t" style="font-size:15px;line-height:15px;color:#666;right:805.2px;top:1579px;transform-origin:100% 13px;transform:rotate(-90deg);">Nov 1</div>
<div class="t" style="font-size:15px;line-height:15px;color:#666;right:648.38px;top:1579px;transform-origin:100% 13px;transform:rotate(-90deg);">Nov 2</div>
<div class="t" style="font-size:15px;line-height:15px;color:#666;right:491.56px;top:1579px;transform-origin:100% 13px;transform:rotate(-90deg);">Nov 3</div>
<div class="b" style="left:237px;top:1656px;width:15px;height:15px;background:#e2463c;"></div>
<div class="t" style="font-size:17.5px;line-height:17.5px;color:#484848;-webkit-text-stroke:0.525px;transform-origin:0 0;transform:scaleX(1.0552);left:259.57px;top:1657px;">/api/evaluate/model</div>
<div class="b" style="left:452px;top:1656px;width:15px;height:15px;background:#f3b427;"></div>
<div class="t" style="font-size:17.5px;line-height:17.5px;color:#484848;-webkit-text-stroke:0.525px;transform-origin:0 0;transform:scaleX(1.0678);left:474.58px;top:1657px;">/api/load/data</div>
<div class="b" style="left:620px;top:1656px;width:15px;height:15px;background:#6dc36a;"></div>
<div class="t" style="font-size:17.5px;line-height:17.5px;color:#484848;-webkit-text-stroke:0.525px;transform-origin:0 0;transform:scaleX(1.0514);left:642.57px;top:1657px;">/api/query</div>
<div class="b" style="left:756px;top:1656px;width:15px;height:15px;background:#2e78d5;"></div>
<div class="t" style="font-size:17.5px;line-height:17.5px;color:#484848;-webkit-text-stroke:0.525px;transform-origin:0 0;transform:scaleX(1.0841);left:778.33px;top:1657px;">/api/train/model</div>
<div class="b" style="left:940px;top:1656px;width:15px;height:15px;background:#8756d4;"></div>
<div class="t" style="font-size:17.5px;line-height:17.5px;color:#484848;-webkit-text-stroke:0.525px;transform-origin:0 0;transform:scaleX(1.0763);left:962.83px;top:1657px;">/api/transform/output</div>
<div class="b" style="left:1169px;top:1656px;width:15px;height:15px;background:#656d75;"></div>
<div class="t" style="font-size:17.5px;line-height:17.5px;color:#484848;-webkit-text-stroke:0.525px;transform-origin:0 0;transform:scaleX(1.0504);left:1191.32px;top:1657px;">/v1/video/generate</div>
<div class="b" style="left:472.75px;top:1696.25px;width:15px;height:15px;background:#e8643a;"></div>
<div class="t" style="font-size:17.5px;line-height:17.5px;color:#484848;-webkit-text-stroke:0.525px;transform-origin:0 0;transform:scaleX(1.063);left:495.08px;top:1697px;">/v1/text/generate</div>
<div class="b" style="left:666px;top:1696.25px;width:15px;height:15px;background:#a9cf22;"></div>
<div class="t" style="font-size:17.5px;line-height:17.5px;color:#484848;-webkit-text-stroke:0.525px;transform-origin:0 0;transform:scaleX(1.0514);left:688.32px;top:1697px;">/v1/image/generate</div>
<div class="b" style="left:877.75px;top:1696.25px;width:15px;height:15px;background:#46a1f3;"></div>
<div class="t" style="font-size:17.5px;line-height:17.5px;color:#484848;-webkit-text-stroke:0.525px;transform-origin:0 0;transform:scaleX(1.0479);left:900.32px;top:1697px;">/v1/embeddings/generate</div>
<div class="b" style="left:1472px;top:63px;width:328px;height:854.5px;border-radius:3px;background:#fff;"></div>
<div class="b" style="left:1472px;top:155px;width:328px;height:220px;background:#f4f4f4;"></div>
<div class="b" style="left:1472px;top:155px;width:328px;height:1px;background:#c6cdcd;"></div>
<div class="b" style="left:1472px;top:198px;width:328px;height:1px;background:#c6cdcd;"></div>
<div class="b" style="left:1472px;top:271px;width:328px;height:1px;background:#c6cdcd;"></div>
<div class="b" style="left:1472px;top:374.5px;width:328px;height:1px;background:#c6cdcd;"></div>
<div class="t" style="font-size:26.25px;line-height:26.25px;color:#585858;-webkit-text-stroke:0.787px;transform-origin:0 0;transform:scaleX(0.9926);left:1487.88px;top:72px;">P90 latency over 0.5</div>
<div class="t" style="font-size:26.25px;line-height:26.25px;color:#585858;-webkit-text-stroke:0.787px;transform-origin:0 0;transform:scaleX(0.988);left:1489.15px;top:98px;">seconds</div>
<svg class="b" style="left:1487px;top:94px;" width="48" height="7" viewBox="0 0 48 7"><g transform="translate(0.3 0.3)"><path d="M0 3 Q1.65 -0.7 3.3 3 Q4.95 6.7 6.6 3 Q8.25 -0.7 9.9 3 Q11.55 6.7 13.2 3 Q14.85 -0.7 16.5 3 Q18.15 6.7 19.8 3 Q21.45 -0.7 23.1 3 Q24.75 6.7 26.4 3 Q28.05 -0.7 29.7 3 Q31.35 6.7 33 3 Q34.65 -0.7 36.3 3 Q37.95 6.7 39.6 3 Q41.25 -0.7 42.9 3 Q44.55 6.7 46.2 3" fill="none" stroke="#e8402a" stroke-width="1.15"/></g></svg>
<div class="t" style="font-size:17.5px;line-height:17.5px;color:#555;transform-origin:0 0;transform:scaleX(0.9946);left:1478.63px;top:170px;">For each</div>
<div class="b" style="left:1552px;top:164px;width:120px;height:27px;border-radius:3px;border:1px solid #c6cdcd;"></div>
<div class="t" style="font-size:17.5px;line-height:17.5px;color:#555;transform-origin:0 0;transform:scaleX(1.0272);left:1558.32px;top:170px;">request.route</div>
<div class="t" style="font-size:17.5px;line-height:17.5px;color:#555;font-weight:700;transform-origin:0 0;transform:scaleX(0.939);left:1478.93px;top:213px;">For events where</div>
<div class="b" style="left:1479px;top:237px;width:182px;height:25px;border-radius:3px;border:1px solid #c6cdcd;"></div>
<div class="t" style="font-size:17.5px;line-height:17.5px;color:#555;transform-origin:0 0;transform:scaleX(0.9715);left:1486.36px;top:241px;">event_type is <b>api_call</b></div>
<div class="t" style="font-size:17.5px;line-height:17.5px;color:#555;font-weight:700;transform-origin:0 0;transform:scaleX(0.9451);left:1479.5px;top:286px;">Alert when</div>
<div class="b" style="left:1479px;top:310px;width:106px;height:25px;border-radius:3px;border:1px solid #c6cdcd;"></div>
<div class="t" style="font-size:17.5px;line-height:17.5px;color:#555;transform-origin:0 0;transform:scaleX(1.0097);left:1485.84px;top:314px;">p90 latency</div>
<div class="t" style="font-size:17.5px;line-height:17.5px;color:#555;transform-origin:0 0;transform:scaleX(1.0231);left:1587.32px;top:314px;">is</div>
<div class="b" style="left:1603px;top:310px;width:145px;height:25px;border-radius:3px;border:1px solid #c6cdcd;"></div>
<div class="t" style="font-size:17.5px;line-height:17.5px;color:#555;transform-origin:0 0;transform:scaleX(1.0094);left:1610.1px;top:314px;">greater than 500</div>
<div class="t" style="font-size:17.5px;line-height:17.5px;color:#555;transform-origin:0 0;transform:scaleX(0.9878);left:1479.36px;top:343px;">over the</div>
<div class="b" style="left:1545px;top:340px;width:76px;height:24px;border-radius:3px;border:1px solid #c6cdcd;"></div>
<div class="t" style="font-size:17.5px;line-height:17.5px;color:#555;transform-origin:0 0;transform:scaleX(1.0092);left:1551.59px;top:342px;">last day</div>
<div class="t" style="font-size:17.5px;line-height:17.5px;color:#555;font-weight:700;transform-origin:0 0;transform:scaleX(0.9414);left:1481.18px;top:384px;">Evaluation Period &amp; Frequency</div>
<div class="b" style="left:1482px;top:408px;width:319px;height:38px;border-radius:5px;border:1px solid #c6cdcd;background:#fff;"></div>
<div class="t" style="font-size:17.5px;line-height:17.5px;color:#4f585e;transform-origin:0 0;transform:scaleX(0.9787);left:1488.16px;top:419px;">Each Calendar day</div>
<div class="b" style="left:1482px;top:466px;width:22px;height:22px;border-radius:3.5px;border:2px solid #555;background:#fff;"></div>
<div class="t" style="font-size:17.5px;line-height:17.5px;color:#555;transform-origin:0 0;transform:scaleX(0.99);left:1510.56px;top:468px;">Off</div>
<div class="b" style="left:1482px;top:501px;width:240px;height:38px;border-radius:4px;border:1px solid #c6cdcd;background:#fff;"></div>
<div class="b" style="left:1613.5px;top:501.5px;width:107.5px;height:36.25px;border-radius:0 4px 4px 0;background:#545b5f;"></div>
<div class="t" style="font-size:17.5px;line-height:17.5px;color:#4f585e;transform-origin:0 0;transform:scaleX(1.0239);left:1492.09px;top:511px;">Dynamic Alert</div>
<div class="t" style="font-size:17.5px;line-height:17.5px;color:#fff;transform-origin:0 0;transform:scaleX(1.0419);left:1623.38px;top:511px;">Static Alert</div>
<div class="t" style="font-size:17.5px;line-height:17.5px;color:#555;font-weight:700;transform-origin:0 0;transform:scaleX(0.9333);left:1482.33px;top:555px;">Threshold</div>
<div class="b" style="left:1567.7px;top:553px;width:18.8px;height:18.8px;border-radius:50%;background:#bdbdbd;"></div>
<div class="t" style="font-size:15px;line-height:15px;color:#fff;font-weight:700;left:1377.1px;width:400px;text-align:center;top:555px;"><span>?</span></div>
<div class="b" style="left:1482px;top:577px;width:98px;height:37px;border-radius:5px;border:1px solid #c6cdcd;background:#fff;"></div>
<div class="t" style="font-size:16px;line-height:16px;color:#444;left:1489.62px;top:588px;">&gt;</div>
<div class="b" style="left:1589px;top:577px;width:212px;height:37px;border-radius:5px;border:1px solid #c6cdcd;background:#fff;"></div>
<div class="t" style="font-size:17.5px;line-height:17.5px;color:#4f585e;transform-origin:0 0;transform:scaleX(0.9718);left:1600.8px;top:588px;">500</div>
<div class="t" style="font-size:17.5px;line-height:17.5px;color:#555;font-weight:700;transform-origin:0 0;transform:scaleX(0.9223);left:1481.89px;top:631px;">Send To</div>
<div class="b" style="left:1482px;top:652px;width:319px;height:42px;border-radius:5px;border:1px solid #c6cdcd;background:#fff;"></div>
<div class="b" style="left:1488px;top:658px;width:206.75px;height:29.5px;border-radius:2px;background:#e6e6e6;"></div>
<svg class="b" style="left:1497px;top:666px;" width="19.75" height="13.5" viewBox="0 0 19.75 13.5"><g transform="translate(0 0.75)"><rect x="0.8" y="0.8" width="17.1" height="10.9" fill="none" stroke="#4c4c4c" stroke-width="1.5"/><path d="M0.8 1 L9.4 7.6 L18 1" fill="none" stroke="#4c4c4c" stroke-width="1.5"/></g></svg>
<div class="t" style="font-size:15px;line-height:15px;color:#555;transform-origin:0 0;transform:scaleX(1.0134);left:1521.38px;top:664px;">alerts@acmeinc.com</div>
<svg class="b" style="left:1677px;top:669px;" width="10" height="10" viewBox="0 0 10 10"><path d="M0.9 0.9 L8.1 8.1 M8.1 0.9 L0.9 8.1" stroke="#505050" stroke-width="1.9" fill="none"/></svg>
<div class="b" style="left:1482px;top:697px;width:111px;height:26px;border-radius:3px;border:1px solid #e2460f;background:#fff;"></div>
<div class="t" style="font-size:16px;line-height:16px;color:#e2460f;transform-origin:0 0;transform:scaleX(1.0103);left:1488.23px;top:702px;">New Channel</div>
<div class="t" style="font-size:17.5px;line-height:17.5px;color:#555;font-weight:700;transform-origin:0 0;transform:scaleX(0.9531);left:1481.9px;top:741px;">Custom Message</div>
<div class="b" style="left:1626.7px;top:738.6px;width:18.8px;height:18.8px;border-radius:50%;background:#bdbdbd;"></div>
<div class="t" style="font-size:15px;line-height:15px;color:#fff;font-weight:700;left:1436.1px;width:400px;text-align:center;top:740px;"><span>?</span></div>
<div class="b" style="left:1482px;top:763px;width:319px;height:38px;border-radius:5px;border:1px solid #c6cdcd;background:#fff;"></div>
<div class="t" style="font-size:17.5px;line-height:17.5px;color:#bdbdbd;transform-origin:0 0;transform:scaleX(1.0302);left:1492.81px;top:773px;">additional note</div>
<div class="t" style="font-size:16px;line-height:16px;color:#e2460f;transform-origin:0 0;transform:scaleX(1.025);left:1488.45px;top:815px;">Show Advanced Settings</div>
<div class="b" style="left:1482px;top:846px;width:59.75px;height:37.5px;border-radius:4px;background:#e2460f;"></div>
<div class="t" style="font-size:17.5px;line-height:17.5px;color:#fff;transform-origin:0 0;transform:scaleX(0.9934);left:1492.14px;top:857px;">Back</div>
<div class="b" style="left:1547px;top:846px;width:59.75px;height:37.5px;border-radius:4px;background:#ec9c8c;"></div>
<div class="t" style="font-size:17.5px;line-height:17.5px;color:#fff;transform-origin:0 0;transform:scaleX(0.9509);left:1557.99px;top:857px;">Save</div>
<div class="t" style="font-size:17.5px;line-height:17.5px;color:#e2460f;transform-origin:0 0;transform:scaleX(1.0297);left:1482.31px;top:892px;">Alerts documentation</div>
<div class="t" style="font-size:22px;line-height:22px;color:#fff;font-weight:700;transform-origin:0 0;transform:scaleX(0.9484);left:1471.9px;top:944px;">Alert History</div>
<svg class="b" style="left:1680px;top:947px;" width="15" height="15" viewBox="0 0 15 15"><g transform="translate(0.5 0.5)">
<path d="M11.2 4.2 A5.4 5.4 0 1 0 12.2 9.4" fill="none" stroke="#e2460f" stroke-width="1.7"/>
<path d="M13.4 0.8 V6 H8.2 Z" fill="#e2460f"/></g></svg>
<div class="t" style="font-size:16px;line-height:16px;color:#e2460f;transform-origin:0 0;transform:scaleX(0.9969);left:1706.73px;top:947px;">See Latest</div>
<div class="t" style="font-size:17.5px;line-height:17.5px;color:#c8c8c8;transform-origin:0 0;transform:scaleX(1.0091);left:1471.11px;top:983px;">No Recent Alerts Triggered</div>
<div class="b" style="left:1472px;top:1025px;width:106px;height:37px;border-radius:4px;border:1px solid #c8c8c8;"></div>
<div class="t" style="font-size:17.5px;line-height:17.5px;color:#fff;transform-origin:0 0;transform:scaleX(1.0103);left:1482.36px;top:1035px;">Load More</div>
<div class="b" style="left:1729px;top:385px;width:74.8px;height:74.8px;border-radius:50%;background:#e2460f;box-shadow:0 1px 9px 1px rgba(0,0,0,0.2);"></div>
<svg class="b" style="left:1750px;top:404px;" width="41" height="39" viewBox="0 0 41 39">
<g fill="none" stroke="#fff" stroke-width="2.5" stroke-linejoin="round" stroke-linecap="round">
<path d="M9.4 2.7 H40"/>
<path d="M2.3 33.4 V10.7 Q2.3 8.2 4.8 8.2 H25 Q27.6 8.2 27.6 10.7 V24.5 Q27.6 27 25 27 H9.6 Z"/>
</g></svg>
</div>
</body></html>
